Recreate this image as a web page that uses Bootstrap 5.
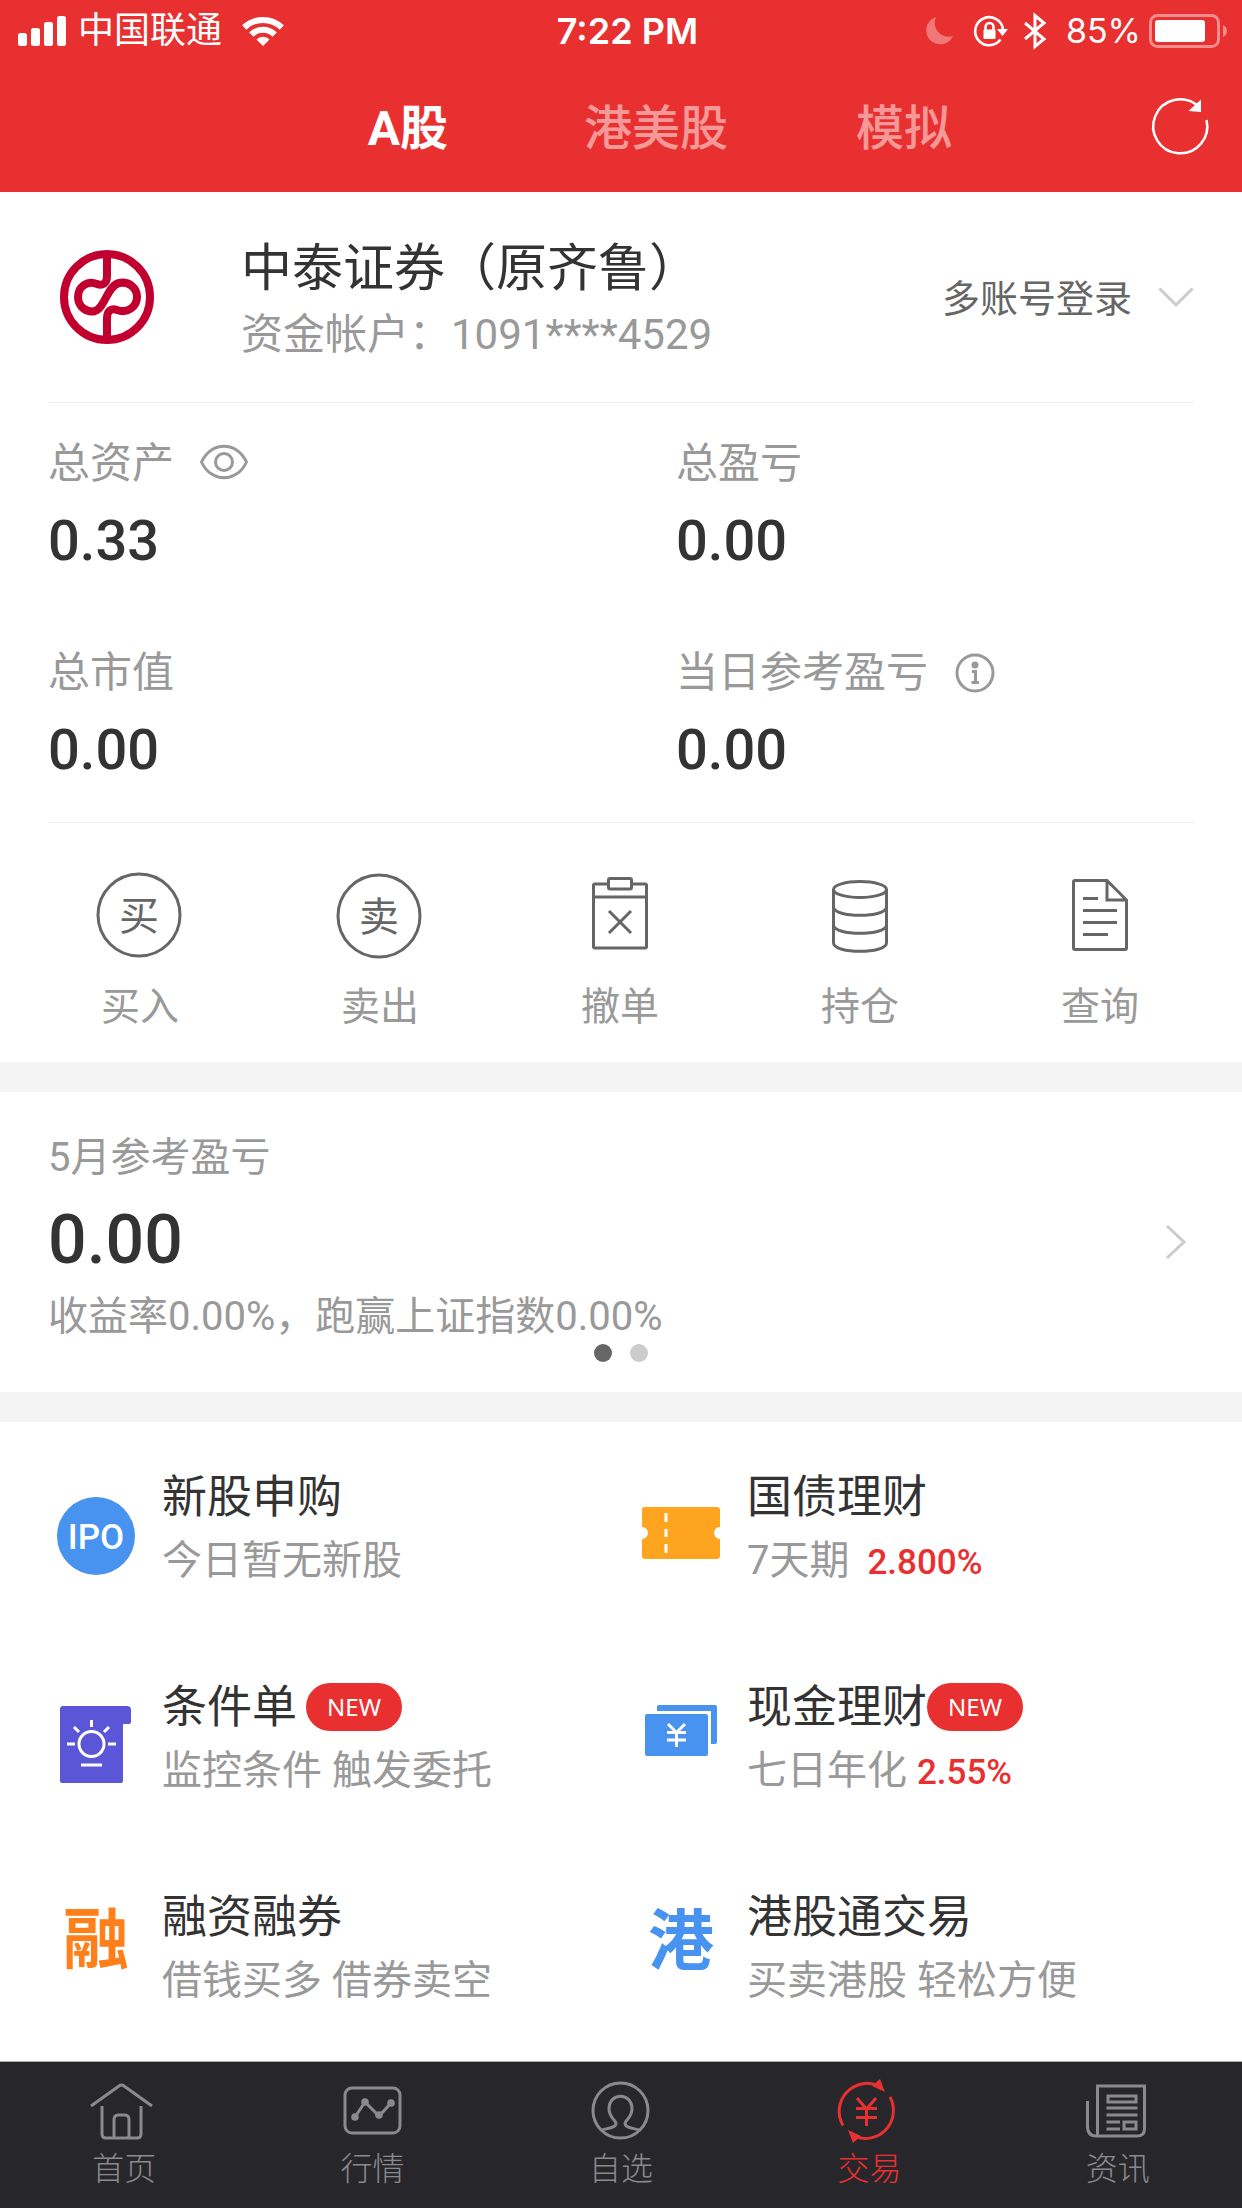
<!DOCTYPE html>
<html lang="zh-CN">
<head>
<meta charset="utf-8">
<meta name="viewport" content="width=device-width, initial-scale=1">
<title>交易</title>
<link href="https://cdn.jsdelivr.net/npm/bootstrap@5.3.0/dist/css/bootstrap.min.css" rel="stylesheet">
<style>
  :root { --red: #e93030; --ink: #333; --muted: #999; --line: #ededed; }
  body { font-family: Roboto, "Noto Sans CJK SC", sans-serif; color: var(--ink); background: #fff; }
  a { color: inherit; text-decoration: none; }
  svg { display: block; flex: none; overflow: visible; }
  .topbar { background: var(--red); color: #fff; }
  .statusbar { height: 60px; padding: 2px 15px 0 18px; font-size: 36px; line-height: 58px; }
  .status-side { flex: 1 1 0; }
  .clock { font-family: Inter, sans-serif; font-weight: 600; font-size: 36px; padding-left: 10px; }
  .battery-text { font-family: Inter, sans-serif; font-size: 34px; }
  .market { height: 132px; padding: 0 30px 0 284px; }
  .market-tab { flex: 0 0 248px; padding: 6px 0 0; border: 0; background: none; color: #fff; font-size: 48px; line-height: 72px; opacity: .5; font-weight: 500; }
  .market-tab.active { opacity: 1; font-weight: 700; }
  .plain-btn { padding: 0; border: 0; background: none; color: inherit; }
  .inset { margin: 0 48px; }
  .account { height: 211px; padding-left: 12px; border-bottom: 1px solid var(--line); }
  .broker { margin: 8px 0 0 87px; }
  .broker h1 { font-size: 51px; line-height: 68px; font-weight: 400; margin: 0; }
  .broker p { font-size: 42px; line-height: 64px; color: var(--muted); margin: 0; }
  .switcher { font-size: 38px; line-height: 60px; color: #666; gap: 26px; }
  .switcher span { padding-top: 4px; }
  .stats { border-bottom: 1px solid var(--line); padding-bottom: 1px; }
  .stat { padding: 31px 0 24px; }
  .stat dt { font-size: 42px; line-height: 60px; font-weight: 400; color: var(--muted); gap: 26px; }
  .stat dd { font-size: 56px; line-height: 94px; font-weight: 500; margin: 0; }
  .stat-left { flex: 0 0 628px; }
  .actions { padding: 51px 22px 30px 20px; }
  .actions a { flex: 1 1 0; font-size: 39px; line-height: 50px; color: var(--muted); gap: 24px; }
  .actions svg { color: #666; }
  .band { height: 30px; background: #f4f4f4; }
  .profit { padding: 36px 0 30px; }
  .profit a { padding: 0 55px 0 48px; }
  .profit h2 { font-size: 40px; line-height: 60px; font-weight: 400; color: var(--muted); margin: 0; }
  .profit strong { font-size: 68px; line-height: 104px; font-weight: 500; }
  .profit p { font-size: 40px; line-height: 50px; color: var(--muted); margin: 0; }
  .profit-arrow { margin-top: 14px; }
  .pager { gap: 18px; margin-top: 2px; }
  .pager button { width: 18px; height: 18px; border-radius: 50%; background: #ccc; }
  .pager button.active { background: #666; }
  .services { padding: 0 72px 9px 0; }
  .service { padding: 44px 0 40px 56px; gap: 26px; white-space: nowrap; }
  .service h3 { font-size: 45px; line-height: 64px; font-weight: 400; margin: 0; }
  .service p { font-size: 40px; line-height: 62px; color: var(--muted); margin: 0; }
  .rate { font-size: 35px; line-height: 1; font-weight: 500; color: var(--red); }
  .title-line { position: relative; }
  .new-pill { position: absolute; left: 144px; top: 7px; width: 96px; height: 48px; border-radius: 24px; background: var(--red); color: #fff; font: 400 24px/48px "Noto Sans", sans-serif; text-align: center; }
  .new-pill-wide { left: 180px; }
  .tabbar { background: #27262b; border-top: 1px solid #aaa; color: #8a8a8a; padding: 17px 0; }
  .tabbar a { flex: 1 1 0; font-size: 32px; line-height: 44px; font-weight: 300; gap: 4px; }
  .tabbar a.active { color: var(--red); }
  .cjk-icon { font-family: "Noto Sans CJK SC", sans-serif; }
</style>
</head>
<body class="d-flex flex-column min-vh-100">
<header class="topbar">
  <div class="statusbar d-flex align-items-center">
    <div class="status-side d-flex align-items-center">
      <svg width="48" height="30" viewBox="0 0 48 30" fill="#fff" aria-hidden="true"><rect y="17" width="9" height="13" rx="2.500"/><rect x="13" y="12" width="9" height="18" rx="2.500"/><rect x="26" y="6" width="9" height="24" rx="2.500"/><rect x="39" width="9" height="30" rx="2.500"/></svg>
      <span class="ms-2 ps-1 me-3 pe-1">中国联通</span>
      <svg width="42" height="30" viewBox="0 0 42 30" fill="none" stroke="#fff" stroke-width="6" aria-hidden="true"><path d="M2.200 11.500A27 27 0 0 1 39.800 11.500"/><path d="M9.300 18.700A16.500 16.500 0 0 1 32.700 18.700"/><path d="M14.500 23.500A9.200 9.200 0 0 1 27.500 23.500L21 30Z" fill="#fff" stroke="none"/></svg>
    </div>
    <div class="clock">7:22 PM</div>
    <div class="status-side d-flex align-items-center justify-content-end">
      <svg class="me-3" width="28" height="28" viewBox="0 0 28 28" fill="#fff" opacity=".35" aria-hidden="true"><path d="M10 0A14 14 0 1 0 27 19A14 14 0 0 1 10 0Z"/></svg>
      <svg class="me-3 ms-1" width="34" height="32" viewBox="0 0 34 32" fill="none" stroke="#fff" stroke-width="2.600" aria-hidden="true"><path d="M26.500 24.500A14 14 0 1 1 29 14"/><path d="M23 14H34L28.500 21Z" fill="#fff" stroke="none"/><path d="M11.500 15V12a4 4 0 0 1 8 0v3"/><rect x="9.500" y="14.500" width="12" height="9.500" rx="1" fill="#fff" stroke="none"/></svg>
      <svg class="me-3" width="22" height="36" viewBox="0 0 22 36" fill="none" stroke="#fff" stroke-width="3" aria-hidden="true"><path d="M1 10L20 26L11 33.500V2.500L20 10L1 26"/></svg>
      <span class="battery-text me-2 ps-1">85%</span>
      <svg width="78" height="34" viewBox="0 0 78 34" aria-hidden="true"><rect x="1.500" y="1.500" width="68" height="31" rx="7" fill="none" stroke="#fff" stroke-opacity=".45" stroke-width="3"/><rect x="6" y="6" width="50" height="22" rx="3" fill="#fff"/><path d="M74 11q4 2 4 6t-4 6z" fill="#fff" fill-opacity=".45"/></svg>
    </div>
  </div>
  <div class="market d-flex align-items-center">
    <nav class="d-flex" aria-label="市场">
      <button class="market-tab active" type="button">A股</button>
      <button class="market-tab" type="button">港美股</button>
      <button class="market-tab" type="button">模拟</button>
    </nav>
    <button class="plain-btn ms-auto" type="button" aria-label="刷新">
      <svg width="64" height="64" viewBox="0 0 64 64" fill="none" stroke="#fff" stroke-width="2.500"><path d="M58.500 26A27 27 0 1 1 50 12"/><path d="M53 5.500V18L40.500 17Z" fill="#fff" stroke="none"/></svg>
    </button>
  </div>
</header>

<main>
  <section class="inset account d-flex align-items-center">
    <svg width="94" height="94" viewBox="0 0 94 94" fill="none" stroke="#c1002f" stroke-width="8" aria-hidden="true"><circle cx="47" cy="47" r="43"/><path d="M47 6V26C47 34 42 36 37 34C27 30 18 37 18 47S27 63 35 61C45 58 47 36 59 33C69 31 77 38 77 47S68 64 57 60C52 58 47 60 47 68V88"/></svg>
    <div class="broker">
      <h1>中泰证券（原齐鲁）</h1>
      <p>资金帐户：1091****4529</p>
    </div>
    <button class="plain-btn switcher d-flex align-items-center ms-auto" type="button"><span>多账号登录</span>
      <svg width="36" height="20" viewBox="0 0 36 20" fill="none" stroke="#ccc" stroke-width="3"><path d="M1.500 1.500L18 18L34.500 1.500"/></svg>
    </button>
  </section>

  <section class="inset stats">
    <div class="d-flex">
      <dl class="stat stat-left mb-0"><dt class="d-flex align-items-center">总资产
        <svg width="48" height="36" viewBox="0 0 48 36" fill="none" stroke="#999" stroke-width="3" aria-hidden="true"><path d="M1.500 16C11 -5 37 -5 46.500 16C37 37 11 37 1.500 16Z"/><circle cx="24" cy="16" r="8.500"/></svg></dt><dd>0.33</dd></dl>
      <dl class="stat mb-0"><dt>总盈亏</dt><dd>0.00</dd></dl>
    </div>
    <div class="d-flex">
      <dl class="stat stat-left mb-0"><dt>总市值</dt><dd>0.00</dd></dl>
      <dl class="stat mb-0"><dt class="d-flex align-items-center">当日参考盈亏
        <svg width="40" height="40" viewBox="0 0 40 40" fill="none" stroke="#999" stroke-width="3" aria-hidden="true"><circle cx="21" cy="20" r="18"/><circle cx="21" cy="12" r="3.500" fill="#999" stroke="none"/><path d="M18 18.500H21.500V29.500M17.500 29.500H25"/></svg></dt><dd>0.00</dd></dl>
    </div>
  </section>

  <nav class="actions d-flex" aria-label="交易操作">
    <a href="#" class="d-flex flex-column align-items-center"><svg width="84" height="84" viewBox="0 0 84 84" fill="none" stroke="currentColor" stroke-width="3"><circle cx="41" cy="41" r="41"/><text class="cjk-icon" x="41" y="56" font-size="40" text-anchor="middle" fill="currentColor" stroke="none">买</text></svg>买入</a>
    <a href="#" class="d-flex flex-column align-items-center"><svg width="84" height="84" viewBox="0 0 84 84" fill="none" stroke="currentColor" stroke-width="3"><circle cx="41" cy="42" r="41"/><text class="cjk-icon" x="41" y="57" font-size="40" text-anchor="middle" fill="currentColor" stroke="none">卖</text></svg>卖出</a>
    <a href="#" class="d-flex flex-column align-items-center"><svg width="84" height="84" viewBox="0 0 84 84" fill="none" stroke="currentColor" stroke-width="3"><path d="M30 10H17Q15.500 10 15.500 11.500V72.500Q15.500 74 17 74H67Q68.500 74 68.500 72.500V11.500Q68.500 10 67 10H54M15.500 23H68.500M31 37L53 59M53 37L31 59"/><rect x="30.500" y="4.500" width="23" height="10.500" rx="1.500"/></svg>撤单</a>
    <a href="#" class="d-flex flex-column align-items-center"><svg width="84" height="84" viewBox="0 0 84 84" fill="none" stroke="currentColor" stroke-width="3"><ellipse cx="42" cy="15.500" rx="26.500" ry="8"/><path d="M15.500 15.500V69C15.500 80 68.500 80 68.500 69V15.500M15.500 33C15.500 44 68.500 44 68.500 33M15.500 51C15.500 62 68.500 62 68.500 51"/></svg>持仓</a>
    <a href="#" class="d-flex flex-column align-items-center"><svg width="84" height="84" viewBox="0 0 84 84" fill="none" stroke="currentColor" stroke-width="3"><path d="M49 6.500H17Q15.500 6.500 15.500 8V74Q15.500 75.500 17 75.500H67Q68.500 75.500 68.500 74V26ZM49 6.500V26H68.500M25 24.500H40M25 36.500H59M25 48.500H59M25 60.500H50"/></svg>查询</a>
  </nav>
  <div class="band"></div>

  <section class="profit">
    <a href="#" class="d-flex align-items-center justify-content-between">
      <div>
        <h2>5月参考盈亏</h2>
        <strong class="d-block">0.00</strong>
        <p>收益率0.00%，跑赢上证指数0.00%</p>
      </div>
      <svg class="profit-arrow" width="22" height="36" viewBox="0 0 22 36" fill="none" stroke="#ccc" stroke-width="3" aria-hidden="true"><path d="M2 2L19 18L2 34"/></svg>
    </a>
    <div class="pager d-flex justify-content-center">
      <button class="plain-btn active" type="button" aria-label="第1页"></button>
      <button class="plain-btn" type="button" aria-label="第2页"></button>
    </div>
  </section>
  <div class="band"></div>

  <section class="services">
    <div class="row g-0">
      <div class="col-6"><a href="#" class="service d-flex align-items-center">
        <svg width="80" height="96" viewBox="0 0 80 96" aria-hidden="true"><circle cx="40" cy="55" r="39" fill="#4892f0"/><text x="40" y="68" font-size="35" font-weight="500" text-anchor="middle" fill="#fff">IPO</text></svg>
        <div><h3>新股申购</h3><p>今日暂无新股</p></div></a></div>
      <div class="col-6"><a href="#" class="service d-flex align-items-center">
        <svg width="80" height="96" viewBox="0 0 80 96" aria-hidden="true"><path d="M4 26H76Q79 26 79 29V46A6 6 0 0 0 79 58V75Q79 78 76 78H4Q1 78 1 75V58A6 6 0 0 0 1 46V29Q1 26 4 26Z" fill="#ffa41f"/><path d="M25 32V41M25 48V56M25 63V72" stroke="#fff" stroke-width="3"/></svg>
        <div><h3>国债理财</h3><p>7天期 <span class="rate ms-2">2.800%</span></p></div></a></div>
      <div class="col-6"><a href="#" class="service d-flex align-items-center">
        <svg width="80" height="96" viewBox="0 0 80 96" fill="none" stroke="#fff" stroke-width="3" aria-hidden="true"><path d="M7 15H71Q75 15 75 19V31Q75 33 73 33H67V90Q67 92 65 92H6Q4 92 4 90V18Q4 15 7 15Z" fill="#5b55d8" stroke="none"/><circle cx="35.500" cy="53" r="12.500"/><path d="M35.500 29V36M11 53H19M52 53H60M18 36L23 41M53 36L48 41M25 74H46"/></svg>
        <div><h3 class="title-line">条件单<span class="new-pill">NEW</span></h3><p>监控条件 触发委托</p></div></a></div>
      <div class="col-6"><a href="#" class="service d-flex align-items-center">
        <svg width="80" height="96" viewBox="0 0 80 96" fill="#4892f0" aria-hidden="true"><rect x="4" y="23" width="63" height="42" rx="2"/><path d="M16 20V16Q16 14 18 14H74Q76 14 76 16V51Q76 53 74 53H70V20Z"/><path d="M27 33L35.500 41.500L44 33M35.500 41V56M26 41.500H45M26 49H45" fill="none" stroke="#fff" stroke-width="3"/></svg>
        <div><h3 class="title-line">现金理财<span class="new-pill new-pill-wide">NEW</span></h3><p>七日年化 <span class="rate">2.55%</span></p></div></a></div>
      <div class="col-6"><a href="#" class="service d-flex align-items-center">
        <svg width="80" height="96" viewBox="0 0 80 96" aria-hidden="true"><text class="cjk-icon" x="40" y="62" font-size="66" font-weight="700" text-anchor="middle" fill="#ff801a">融</text></svg>
        <div><h3>融资融券</h3><p>借钱买多 借券卖空</p></div></a></div>
      <div class="col-6"><a href="#" class="service d-flex align-items-center">
        <svg width="80" height="96" viewBox="0 0 80 96" aria-hidden="true"><text class="cjk-icon" x="40" y="63" font-size="66" font-weight="700" text-anchor="middle" fill="#4892f0">港</text></svg>
        <div><h3>港股通交易</h3><p>买卖港股 轻松方便</p></div></a></div>
    </div>
  </section>
</main>

<nav class="tabbar d-flex mt-auto" aria-label="主导航">
  <a href="#" class="d-flex flex-column align-items-center"><svg width="72" height="64" viewBox="0 0 72 64" fill="none" stroke="currentColor" stroke-width="3"><path d="M3 27L31 7Q33.500 5 36 7L64 27M14 27V55Q14 59 18 59H49Q53 59 53 55V27M26 59V41Q26 36 30 36H37Q41 36 41 41V59"/></svg>首页</a>
  <a href="#" class="d-flex flex-column align-items-center"><svg width="72" height="64" viewBox="0 0 72 64" fill="none" stroke="currentColor" stroke-width="3"><rect x="8" y="9" width="55" height="45" rx="7"/><path d="M18 38L28 23L42 37L54 24"/><g fill="currentColor" stroke="none"><circle cx="18" cy="38" r="3.800"/><circle cx="28" cy="23" r="3.800"/><circle cx="42" cy="36" r="3.800"/><circle cx="54" cy="24" r="3.800"/></g></svg>行情</a>
  <a href="#" class="d-flex flex-column align-items-center"><svg width="72" height="64" viewBox="0 0 72 64" fill="none" stroke="currentColor" stroke-width="3"><circle cx="35.500" cy="31.500" r="27.500"/><path d="M16.500 51C24 49 31 49 31 44C31 42 24 38 24 30C24 13 47 13 47 30C47 38 40 42 40 44C40 49 47 49 54.500 51"/></svg>自选</a>
  <a href="#" class="active d-flex flex-column align-items-center"><svg width="72" height="64" viewBox="0 0 72 64" fill="none" stroke="currentColor" stroke-width="3"><path d="M10 46.500A28 28 0 0 1 46 7M57 18A28 28 0 0 1 21 57"/><path d="M47 0L52 13L39 7ZM20 64L15 51L28 57Z" fill="currentColor" stroke="none"/><path d="M24 19L33.500 30L43 19M33.500 30V47M23 29.500H44M23 38.500H44"/></svg>交易</a>
  <a href="#" class="d-flex flex-column align-items-center"><svg width="72" height="64" viewBox="0 0 72 64" fill="none" stroke="currentColor" stroke-width="3"><path d="M15.500 57V7H62.500V50Q62.500 57 55 57H14Q5.500 57 5.500 47V22"/><path d="M26 17H54V23H26ZM24.500 29H55.500M24.500 36H55.500M24.500 43H38M24.500 50H38M42 43H54V50H42Z"/></svg>资讯</a>
</nav>
<script src="https://cdn.jsdelivr.net/npm/bootstrap@5.3.0/dist/js/bootstrap.bundle.min.js"></script>
</body>
</html>
